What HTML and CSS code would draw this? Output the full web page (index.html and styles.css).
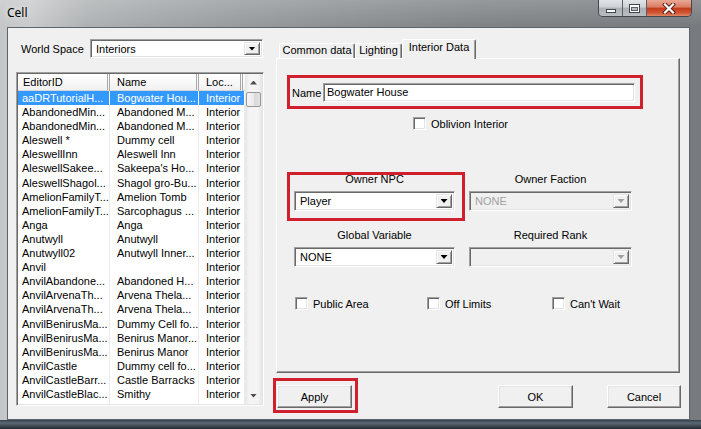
FILE: index.html
```html
<!DOCTYPE html>
<html>
<head>
<meta charset="utf-8">
<title>Cell</title>
<link rel="stylesheet" href="styles.css">
</head>
<body>
<div class="window">
  <div class="titlebar">
    <span class="title">Cell</span>
    <div class="caption">
      <span class="cbtn min"><i></i></span>
      <span class="cbtn max"><i></i></span>
      <span class="cbtn close"><svg width="14" height="11" viewBox="0 0 14 11"><path d="M3 1.5 L11 9.5 M11 1.5 L3 9.5" stroke="#5a1d10" stroke-width="4" stroke-linecap="square"/><path d="M3 1.5 L11 9.5 M11 1.5 L3 9.5" stroke="#fff" stroke-width="2.2" stroke-linecap="square"/></svg></span>
    </div>
  </div>
  <div class="client">
    <div class="left">
      <div class="world-row">
        <span class="wlabel">World Space</span>
        <div class="combo world"><span class="val">Interiors</span><span class="drop"></span></div>
      </div>
      <div class="list">
        <div class="lmain">
          <div class="lhead">
            <span class="h c1">EditorID</span><span class="h c2">Name</span><span class="h c3">Loc...</span><span class="h c4"></span>
          </div>
          <div class="rows">
            <div class="row sel"><span class="c1">aaDRTutorialH...</span><span class="c2">Bogwater Hou...</span><span class="c3">Interior</span></div>
            <div class="row"><span class="c1">AbandonedMin...</span><span class="c2">Abandoned M...</span><span class="c3">Interior</span></div>
            <div class="row"><span class="c1">AbandonedMin...</span><span class="c2">Abandoned M...</span><span class="c3">Interior</span></div>
            <div class="row"><span class="c1">Aleswell *</span><span class="c2">Dummy cell</span><span class="c3">Interior</span></div>
            <div class="row"><span class="c1">AleswellInn</span><span class="c2">Aleswell Inn</span><span class="c3">Interior</span></div>
            <div class="row"><span class="c1">AleswellSakee...</span><span class="c2">Sakeepa's Ho...</span><span class="c3">Interior</span></div>
            <div class="row"><span class="c1">AleswellShagol...</span><span class="c2">Shagol gro-Bu...</span><span class="c3">Interior</span></div>
            <div class="row"><span class="c1">AmelionFamilyT...</span><span class="c2">Amelion Tomb</span><span class="c3">Interior</span></div>
            <div class="row"><span class="c1">AmelionFamilyT...</span><span class="c2">Sarcophagus ...</span><span class="c3">Interior</span></div>
            <div class="row"><span class="c1">Anga</span><span class="c2">Anga</span><span class="c3">Interior</span></div>
            <div class="row"><span class="c1">Anutwyll</span><span class="c2">Anutwyll</span><span class="c3">Interior</span></div>
            <div class="row"><span class="c1">Anutwyll02</span><span class="c2">Anutwyll Inner...</span><span class="c3">Interior</span></div>
            <div class="row"><span class="c1">Anvil</span><span class="c2"></span><span class="c3">Interior</span></div>
            <div class="row"><span class="c1">AnvilAbandone...</span><span class="c2">Abandoned H...</span><span class="c3">Interior</span></div>
            <div class="row"><span class="c1">AnvilArvenaTh...</span><span class="c2">Arvena Thela...</span><span class="c3">Interior</span></div>
            <div class="row"><span class="c1">AnvilArvenaTh...</span><span class="c2">Arvena Thela...</span><span class="c3">Interior</span></div>
            <div class="row"><span class="c1">AnvilBenirusMa...</span><span class="c2">Dummy Cell fo...</span><span class="c3">Interior</span></div>
            <div class="row"><span class="c1">AnvilBenirusMa...</span><span class="c2">Benirus Manor...</span><span class="c3">Interior</span></div>
            <div class="row"><span class="c1">AnvilBenirusMa...</span><span class="c2">Benirus Manor</span><span class="c3">Interior</span></div>
            <div class="row"><span class="c1">AnvilCastle</span><span class="c2">Dummy cell fo...</span><span class="c3">Interior</span></div>
            <div class="row"><span class="c1">AnvilCastleBarr...</span><span class="c2">Castle Barracks</span><span class="c3">Interior</span></div>
            <div class="row"><span class="c1">AnvilCastleBlac...</span><span class="c2">Smithy</span><span class="c3">Interior</span></div>
            <div class="row"><span class="c1">AnvilCastleDini...</span><span class="c2">Dining Hall</span><span class="c3">Interior</span></div>
          </div>
        </div>
        <div class="vscroll">
          <span class="sb-btn"><i class="up"></i></span>
          <span class="thumb"></span>
          <span class="track"></span>
          <span class="sb-btn"><i class="down"></i></span>
        </div>
      </div>
    </div>
    <div class="right">
      <div class="tabs">
        <span class="tab t1">Common data</span>
        <span class="tab t2">Lighting</span>
        <span class="tab t3 active">Interior Data</span>
      </div>
      <div class="panel">
        <div class="namebox">
          <span class="nlabel">Name</span>
          <div class="input">Bogwater House</div>
        </div>
        <div class="obl">
          <span class="cb"></span><span class="cblabel">Oblivion Interior</span>
        </div>
        <div class="fields">
          <div class="field hl">
            <div class="lbl">Owner NPC</div>
            <div class="combo"><span class="val">Player</span><span class="drop"></span></div>
          </div>
          <div class="field">
            <div class="lbl">Owner Faction</div>
            <div class="combo disabled"><span class="val">NONE</span><span class="drop"></span></div>
          </div>
          <div class="field">
            <div class="lbl">Global Variable</div>
            <div class="combo"><span class="val">NONE</span><span class="drop"></span></div>
          </div>
          <div class="field">
            <div class="lbl">Required Rank</div>
            <div class="combo disabled"><span class="val"></span><span class="drop"></span></div>
          </div>
        </div>
        <div class="checks">
          <div class="chk w1"><span class="cb"></span><span class="cblabel">Public Area</span></div>
          <div class="chk w2"><span class="cb"></span><span class="cblabel">Off Limits</span></div>
          <div class="chk"><span class="cb"></span><span class="cblabel">Can't Wait</span></div>
        </div>
      </div>
      <div class="buttons">
        <span class="btn apply hl">Apply</span>
        <span class="btn ok">OK</span>
        <span class="btn cancel">Cancel</span>
      </div>
    </div>
  </div>
</div>
</body>
</html>
```
FILE: styles.css
```css
* { box-sizing: border-box; }
html, body { margin: 0; padding: 0; }
body {
  font-family: "Liberation Sans", Arial, sans-serif;
  font-size: 11px;
  color: #000;
  background: #6f7478;
}

.window {
  width: 701px;
  height: 429px;
  display: flex;
  flex-direction: column;
  overflow: hidden;
  background:
    linear-gradient(180deg, rgba(0,0,0,0) 0, rgba(0,0,0,0) 420px, #34404a 420px, #5a6975 423px, #3d4a55 426px, #222a31 429px),
    linear-gradient(180deg, rgba(255,255,255,0.18) 0, rgba(255,255,255,0) 26px),
    linear-gradient(90deg, #c4c6c7 0, #c9cbcc 30px, #aeb1b3 90px, #a2a6a9 160px, #979b9e 240px, #8a8e91 360px, #7f8386 480px, #777b7e 701px);
}

.titlebar {
  flex: none;
  height: 27px;
  display: flex;
  align-items: flex-start;
}
.title {
  font-family: "Noto Sans", "Open Sans", sans-serif;
  font-size: 12px;
  line-height: 26px;
  padding-left: 7px;
  text-shadow: 0 0 6px rgba(255,255,255,0.9);
}
.caption {
  margin-left: auto;
  margin-right: 9px;
  display: flex;
  height: 17px;
  border: 1px solid #41474d;
  border-top: none;
  border-radius: 0 0 5px 5px;
  overflow: hidden;
}
.cbtn {
  width: 24px;
  height: 16px;
  display: flex;
  align-items: center;
  justify-content: center;
  border-right: 1px solid #5a6066;
  background: linear-gradient(180deg, #e2e5e7 0, #cdd1d4 45%, #aab0b4 50%, #b8bec2 100%);
}
.cbtn.close {
  width: 44px;
  border-right: none;
  background: linear-gradient(180deg, #e9a896 0, #d97c62 45%, #c33a1b 50%, #cf5533 80%, #e18866 100%);
}
.min i {
  display: block;
  width: 10px;
  height: 4px;
  margin-top: 6px;
  background: #fff;
  border: 1px solid #40464c;
}
.max i {
  display: block;
  position: relative;
  width: 11px;
  height: 9px;
  background: #fff;
  border: 1px solid #40464c;
}
.max i::after {
  content: "";
  position: absolute;
  left: 1px;
  right: 1px;
  top: 2px;
  bottom: 1px;
  background: #b7bdc1;
  border: 1px solid #5a6066;
}

.client {
  flex: 1;
  margin: 0 11px 9px 7px;
  background: #f0f0f0;
  border: 1px solid #5b656d;
  display: flex;
  align-items: flex-start;
  padding: 11px 0 0 8px;
}

/* Left side */
.left {
  width: 248px;
  display: flex;
  flex-direction: column;
}
.world-row {
  display: flex;
  align-items: center;
  height: 19px;
  padding-left: 5px;
}
.wlabel { width: 69px; white-space: nowrap; }
.combo {
  height: 19px;
  background: #fff;
  border: 1px solid;
  border-color: #a0a0a0 #fff #fff #a0a0a0;
  box-shadow: inset 1px 1px 0 #696969, inset -1px -1px 0 #e3e3e3;
  display: flex;
  align-items: center;
  padding: 2px 2px 2px 5px;
}
.combo.world { width: 173px; }
.combo .val { flex: 1; white-space: nowrap; overflow: hidden; }
.drop {
  flex: none;
  width: 16px;
  height: 100%;
  background: #f0f0f0;
  border: 1px solid;
  border-color: #e3e3e3 #696969 #696969 #e3e3e3;
  box-shadow: inset 1px 1px 0 #fff, inset -1px -1px 0 #a0a0a0;
  display: flex;
  align-items: center;
  justify-content: center;
}
.drop::before {
  content: "";
  width: 7px;
  height: 4px;
  background: #000;
  clip-path: polygon(0 0, 100% 0, 50% 100%);
}
.combo.disabled { background: #f0f0f0; color: #a0a0a0; }
.combo.disabled .drop::before { background: #a0a0a0; }

.list {
  margin-top: 14px;
  width: 248px;
  height: 334px;
  display: flex;
  background: #fff;
  border: 1px solid;
  border-color: #a0a0a0 #fff #fff #a0a0a0;
  box-shadow: inset 1px 1px 0 #696969, inset -1px -1px 0 #e3e3e3;
  padding: 1px;
}
.lmain {
  width: 227px;
  display: flex;
  flex-direction: column;
  overflow: hidden;
}
.lhead { display: flex; height: 17px; flex: none; }
.h {
  height: 17px;
  line-height: 16px;
  white-space: nowrap;
  overflow: hidden;
  background: linear-gradient(180deg, #ffffff 0, #f7f7f7 60%, #f0f0f0 100%);
  border-bottom: 1px solid #d5d5d5;
  border-right: 3px double #a8a8a8;
}
.h.c1 { width: 92px; padding-left: 5px; }
.h.c2 { width: 89px; padding-left: 7px; }
.h.c3 { width: 44px; padding-left: 7px; }
.h.c4 { flex: 1; border-right: none; }

.rows { flex: 1; overflow: hidden; }
.row { display: flex; height: 14.1px; line-height: 14px; }
.row span {
  white-space: nowrap;
  overflow: hidden;
  border-right: 1px solid #ececec;
}
.row .c1 { width: 92px; padding-left: 4px; }
.row .c2 { width: 89px; padding-left: 7px; }
.row .c3 { width: 46px; padding-left: 7px; }
.row.sel span { background: #3399ff; color: #fff; border-right-color: #fff; }

.vscroll {
  width: 17px;
  display: flex;
  flex-direction: column;
  background: linear-gradient(90deg, #e6e6e6 0, #f4f4f4 25%, #f4f4f4 75%, #e6e6e6 100%);
}
.sb-btn {
  flex: none;
  height: 17px;
  display: flex;
  align-items: center;
  justify-content: center;
}
.sb-btn i {
  display: block;
  width: 7px;
  height: 4px;
  background: #4d4d4d;
}
.sb-btn .up { clip-path: polygon(50% 0, 100% 100%, 0 100%); }
.sb-btn .down { clip-path: polygon(0 0, 100% 0, 50% 100%); }
.thumb {
  flex: none;
  height: 15px;
  margin: 1px 1px 0;
  border: 1px solid #979797;
  border-radius: 2px;
  background: linear-gradient(90deg, #f5f5f5 0, #ebebeb 50%, #d9d9d9 51%, #e2e2e2 100%);
}
.track { flex: 1; }

/* Right side */
.right {
  width: 405px;
  margin-left: 12px;
  display: flex;
  flex-direction: column;
}
.tabs {
  display: flex;
  align-items: flex-end;
  height: 19px;
  padding-left: 3px;
  position: relative;
  z-index: 1;
}
.tab {
  height: 15px;
  line-height: 13px;
  text-align: center;
  white-space: nowrap;
  background: #f0f0f0;
  border-top: 1px solid #fff;
  border-left: 1px solid #fff;
  border-right: 1px solid #696969;
  border-radius: 2px 2px 0 0;
  box-shadow: inset -1px 0 0 #a0a0a0;
}
.tab.t1 { width: 76px; }
.tab.t2 { width: 47px; }
.tab.t3 { width: 74px; }
.tab.active {
  height: 20px;
  margin-bottom: -1px;
  line-height: 15px;
}

.panel {
  width: 404px;
  height: 315px;
  background: #f0f0f0;
  border: 1px solid;
  border-color: #fff #696969 #696969 #fff;
  box-shadow: inset -1px -1px 0 #a0a0a0;
}
.namebox {
  margin: 16px 0 0 10px;
  width: 356px;
  height: 34px;
  border: 3px solid #d0202e;
  display: flex;
  align-items: center;
  padding: 1px 5px 0 2px;
}
.nlabel { width: 31px; white-space: nowrap; }
.input {
  width: 312px;
  height: 19px;
  line-height: 15px;
  padding-left: 3px;
  background: #fff;
  border: 1px solid;
  border-color: #a0a0a0 #fff #fff #a0a0a0;
  box-shadow: inset 1px 1px 0 #696969, inset -1px -1px 0 #e3e3e3;
  padding-top: 1px;
}

.obl {
  display: flex;
  align-items: center;
  height: 13px;
  margin: 8px 0 0 136px;
}
.cb {
  flex: none;
  width: 13px;
  height: 13px;
  background: #fff;
  border: 1px solid;
  border-color: #a0a0a0 #fff #fff #a0a0a0;
  box-shadow: inset 1px 1px 0 #696969, inset -1px -1px 0 #e3e3e3;
}
.cblabel { margin-left: 5px; white-space: nowrap; }

.fields {
  display: grid;
  grid-template-columns: 161px 163px;
  column-gap: 14px;
  row-gap: 17px;
  margin: 42px 0 0 17px;
}
.field .lbl {
  height: 14px;
  line-height: 14px;
  text-align: center;
  white-space: nowrap;
}
.field .combo { margin-top: 5px; height: 20px; }
.field.hl { position: relative; }
.field.hl::after {
  content: "";
  position: absolute;
  left: -7px;
  right: -10px;
  top: 0;
  bottom: -10px;
  border: 3px solid #d0202e;
  pointer-events: none;
}

.checks {
  display: flex;
  margin: 30px 0 0 18px;
}
.chk { display: flex; align-items: center; height: 13px; }
.chk.w1 { width: 132px; }
.chk.w2 { width: 125px; }

.buttons {
  display: flex;
  margin-top: 12px;
  height: 23px;
}
.btn {
  width: 75px;
  height: 23px;
  display: flex;
  align-items: center;
  justify-content: center;
  background: #f0f0f0;
  border: 1px solid;
  border-color: #fff #696969 #696969 #fff;
  box-shadow: inset -1px -1px 0 #a0a0a0, inset 1px 1px 0 #e3e3e3;
}
.btn.apply { margin-left: 1px; }
.btn.ok { margin-left: 146px; }
.btn.cancel { margin-left: 34px; width: 74px; }
.btn.hl { position: relative; }
.btn.hl::after {
  content: "";
  position: absolute;
  left: -5px;
  right: -7px;
  top: -8px;
  bottom: -6px;
  border: 3px solid #d0202e;
  pointer-events: none;
}
```
